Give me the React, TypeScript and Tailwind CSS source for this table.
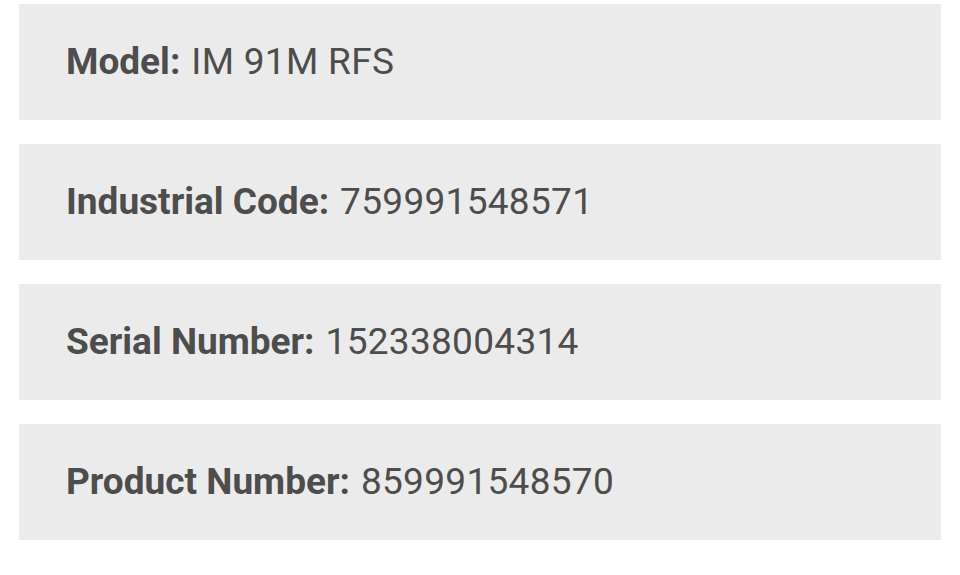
const rows = [
  { label: "Model:", value: "IM 91M RFS" },
  { label: "Industrial Code:", value: "759991548571" },
  { label: "Serial Number:", value: "152338004314" },
  { label: "Product Number:", value: "859991548570" },
];

export default function App() {
  return (
    <div
      className="w-[960px] h-[575px] bg-white pt-[4px] pl-[19px] flex flex-col gap-[24px]"
      style={{ fontFamily: "Roboto, 'Noto Sans', sans-serif" }}
    >
      {rows.map((row) => (
        <div
          key={row.label}
          className="w-[922px] h-[116px] bg-[#ebebeb] flex items-center pl-[47px] text-[37px] text-[#4d4d4d]"
        >
          <span className="font-bold">{row.label}</span>
          <span className="ml-[11px] tracking-[0.3px]">{row.value}</span>
        </div>
      ))}
    </div>
  );
}
